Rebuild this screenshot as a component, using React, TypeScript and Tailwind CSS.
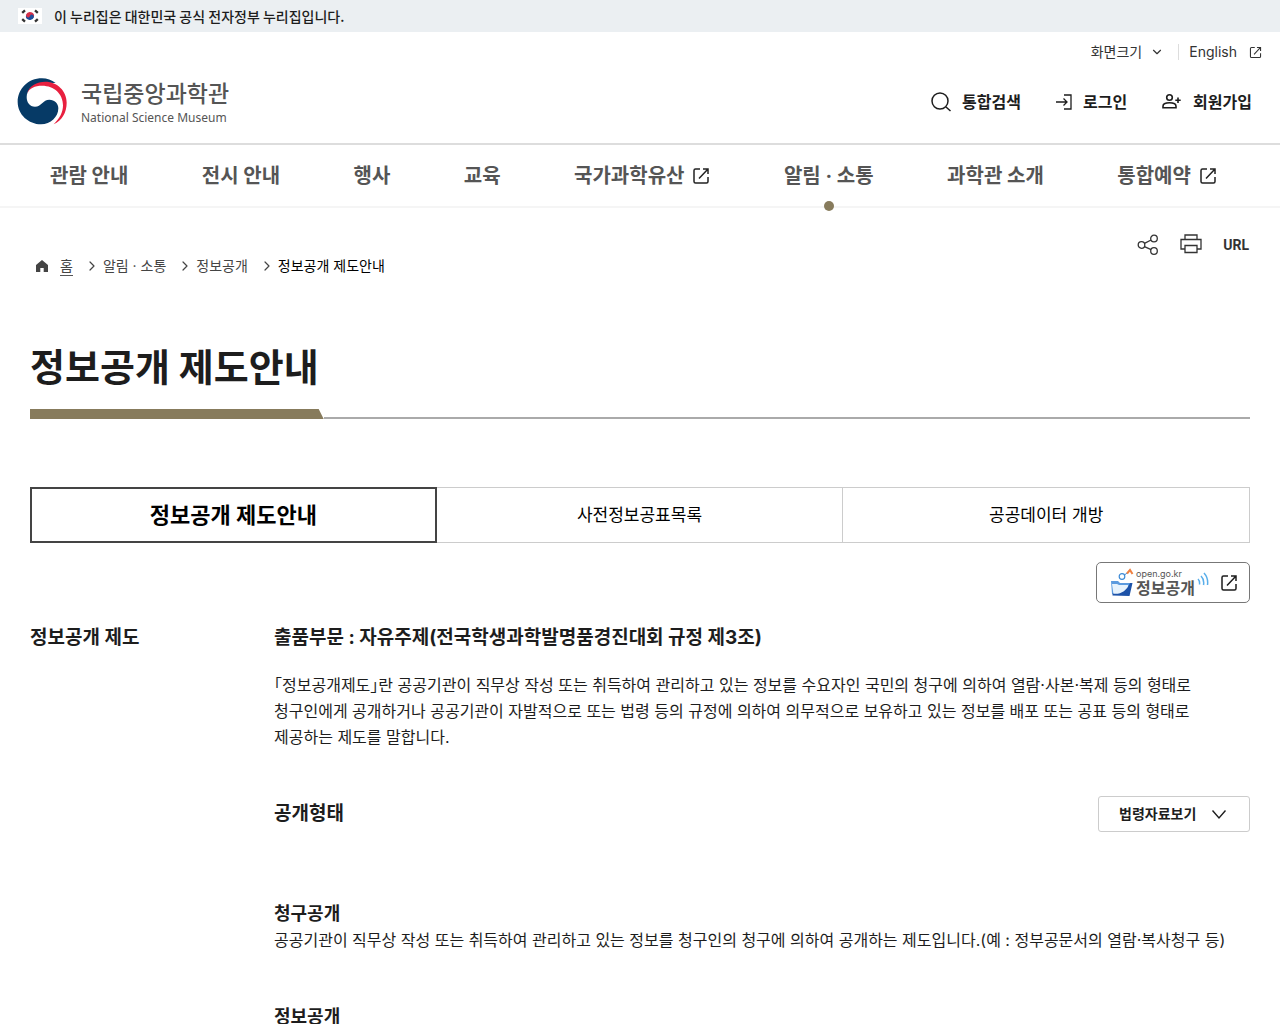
import React from 'react';
import { ChevronDown, ChevronRight } from 'lucide-react';

interface NavItem {
  label: string;
  external?: boolean;
  active?: boolean;
}

const NAV_ITEMS: NavItem[] = [
  { label: '관람 안내' },
  { label: '전시 안내' },
  { label: '행사' },
  { label: '교육' },
  { label: '국가과학유산', external: true },
  { label: '알림 · 소통', active: true },
  { label: '과학관 소개' },
  { label: '통합예약', external: true },
];

const TABS = ['정보공개 제도안내', '사전정보공표목록', '공공데이터 개방'];

function FlagIcon() {
  return (
    <svg viewBox="0 0 24 16" className="h-4 w-6" aria-hidden="true">
      <rect width="24" height="16" fill="#fff" />
      <g transform="rotate(20 12 8)">
        <path d="M8 8a4 4 0 0 1 8 0z" fill="#d5304a" />
        <path d="M8 8a4 4 0 0 0 8 0z" fill="#1d4f9c" />
        <circle cx="10" cy="8" r="2" fill="#d5304a" />
        <circle cx="14" cy="8" r="2" fill="#1d4f9c" />
      </g>
      <g stroke="#333" strokeWidth="2.4">
        <path d="M4.200 4.800l2.800-2.400M17 2.400l2.800 2.400M4.200 11.200l2.800 2.400M17 13.600l2.800-2.400" />
      </g>
    </svg>
  );
}

function LogoMark() {
  return (
    <svg viewBox="50 52 150 141" className="h-[47px] w-[50px]" aria-hidden="true">
      <path
        fill="#063a66"
        d="M166 67C154 58 140 53 125 53 83 53 52 85 52 124c0 38 33 67 70 67 29 0 52-22 52-48 0-15-11-26-27-26-19 0-24 21-43 21-16 0-25-13-25-29 0-22 19-40 51-43z"
      />
      <path
        fill="#e8203f"
        d="M80 98c8-23 29-35 55-35 36 0 64 28 64 63 0 29-14 54-39 65 18-17 28-36 28-57 0-34-26-59-63-59-22 0-37 8-45 23z"
      />
    </svg>
  );
}

function ExternalIcon({ className }: { className: string }) {
  return (
    <svg viewBox="0 0 18 18" className={className} fill="none" stroke="currentColor" strokeWidth="1.5" aria-hidden="true">
      <path d="M8 2H3.5A1.5 1.5 0 0 0 2 3.5v11A1.5 1.5 0 0 0 3.5 16h11a1.5 1.5 0 0 0 1.5-1.5V10M11 2h5v5M16 2 7 11.5" />
    </svg>
  );
}

function SearchIcon() {
  return (
    <svg viewBox="0 0 22 22" className="h-[22px] w-[22px]" fill="none" stroke="currentColor" strokeWidth="1.5" aria-hidden="true">
      <circle cx="10" cy="10" r="8" />
      <path d="m16 16 4.5 4" />
    </svg>
  );
}

function LoginIcon() {
  return (
    <svg viewBox="0 0 18 18" className="h-[18px] w-[18px]" fill="none" stroke="currentColor" strokeWidth="1.3" aria-hidden="true">
      <path d="M9 2h7v14H9M1 9h11M8.5 5.5 12 9l-3.5 3.5" />
    </svg>
  );
}

function JoinIcon() {
  return (
    <svg viewBox="0 0 22 18" className="h-[18px] w-[22px]" fill="none" stroke="currentColor" strokeWidth="1.6" aria-hidden="true">
      <circle cx="8.500" cy="4.500" r="2.800" />
      <path d="M2 14.700v-1.500c0-2.200 3-3.400 6.500-3.400s6.500 1.200 6.500 3.400v1.500zM14.300 7.200h5.400M17 4.500v5.400" />
    </svg>
  );
}

function ShareIcon() {
  return (
    <svg viewBox="0 0 22 22" className="h-[22px] w-[22px]" fill="none" stroke="currentColor" strokeWidth="1.3" aria-hidden="true">
      <circle cx="4.5" cy="11" r="3.3" />
      <circle cx="17" cy="4.5" r="3.3" />
      <circle cx="17" cy="17" r="3.3" />
      <path d="m7.5 9.4 6.6-3.4M7.5 12.6l6.6 3" />
    </svg>
  );
}

function PrintIcon() {
  return (
    <svg viewBox="0 0 22 22" className="h-[22px] w-[22px]" fill="none" stroke="currentColor" strokeWidth="1.3" aria-hidden="true">
      <path d="M5 5.500V1h12v4.500M5 15H1V5.500h20V15h-4" />
      <path d="M5 11.500h12v7H5z" />
    </svg>
  );
}

function HomeIcon() {
  return (
    <svg viewBox="0 0 14 14" className="h-3.5 w-3.5" fill="currentColor" aria-hidden="true">
      <path d="M7 1 1 6v7h4.3V9h3.4v4H13V6z" />
    </svg>
  );
}

// folder with two linked nodes
function FolderIcon() {
  return (
    <svg viewBox="0 0 24 30" className="h-[30px] w-6" aria-hidden="true">
      <path d="M1 13h7l2 2h10v11H2z" fill="#5b9ade" />
      <path d="M2 16 3.500 26.500h14L18 17H9l-2-1z" fill="#e6f2fc" />
      <path d="M20 15h2.500l-3 13-17-.5v-2c7 1.500 14-2 17.500-10.500z" fill="#1c52a8" />
      <circle cx="12" cy="8.500" r="2.800" fill="#fff" stroke="#3d8ad6" strokeWidth="1.2" />
      <path d="m14.500 7 2.500-2" stroke="#3d8ad6" />
      <path d="M17 5.500 20 2l2.500 4" fill="none" stroke="#f08040" strokeWidth="2" />
    </svg>
  );
}

function WaveIcon() {
  return (
    <svg viewBox="0 0 12 16" className="mb-2 h-4 w-3" fill="none" stroke="#59aeea" strokeWidth="1.500" aria-hidden="true">
      <path d="M1 8q2 2 1.500 5.500M4 5q3.500 3.500 2.500 9M7 2q4.500 5 3.500 12" />
    </svg>
  );
}

function Header() {
  return (
    <header>
      <div className="flex h-8 items-center gap-3 bg-[#ebeff2] px-[18px] text-sm text-[#1d1d1d]">
        <FlagIcon />
        <span className="font-['Noto_Sans_CJK_KR',sans-serif] font-medium">
          이 누리집은 대한민국 공식 전자정부 누리집입니다.
        </span>
      </div>

      <div className="flex h-[111px] items-start justify-between pl-[17px] pr-[18px]">
        <a href="#" className="mt-[46px] flex items-start gap-[14px] text-[#555]">
          <LogoMark />
          <span className="flex flex-col">
            <span className="text-[23px] font-medium leading-8">국립중앙과학관</span>
            <span className="font-['Noto_Sans',sans-serif] text-xs">National Science Museum</span>
          </span>
        </a>

        <div className="flex flex-col items-end">
          <div className="mt-[10px] flex h-5 items-center text-sm text-[#333]">
            <button type="button" className="flex items-center gap-2">
              화면크기
              <ChevronDown className="h-[14px] w-[14px]" strokeWidth={2} />
            </button>
            <span className="ml-[14px] mr-[10px] h-4 w-px bg-[#ddd]" />
            <a href="#" className="flex items-center gap-3">
              English
              <ExternalIcon className="h-[13px] w-[13px]" />
            </a>
          </div>
          <div className="mr-[10px] mt-7 flex h-6 items-center gap-[34px] text-base font-bold text-[#1d1d1d]">
            <a href="#" className="flex items-center gap-[10px]">
              <SearchIcon />
              통합검색
            </a>
            <a href="#" className="flex items-center gap-[10px]">
              <LoginIcon />
              로그인
            </a>
            <a href="#" className="flex items-center gap-[10px]">
              <JoinIcon />
              회원가입
            </a>
          </div>
        </div>
      </div>

      <nav className="flex h-[65px] items-center justify-between border-b-2 border-t-2 border-b-[#f5f5f5] border-t-[#ddd] pl-[50px] pr-[63px] text-xl font-bold text-[#555]">
        {NAV_ITEMS.map((item) => (
          <a
            key={item.label}
            href="#"
            className="relative flex h-full items-center gap-2 whitespace-nowrap"
            aria-current={item.active ? 'page' : undefined}
          >
            {item.label}
            {item.external && <ExternalIcon className="h-[18px] w-[18px] text-[#222]" />}
            {item.active && (
              <span className="absolute -bottom-[5px] left-1/2 h-[10px] w-[10px] -translate-x-1/2 rounded-full bg-[#877b5c]" />
            )}
          </a>
        ))}
      </nav>
    </header>
  );
}

function Breadcrumb() {
  return (
    <nav aria-label="현재 위치" className="mt-[46px] flex h-6 items-center gap-[3px] pl-[5px] text-sm text-[#444]">
      <HomeIcon />
      <a href="#" className="ml-2 border-b border-[#555] leading-[18px]">
        홈
      </a>
      <ChevronRight className="ml-2 h-4 w-4" strokeWidth={1.8} />
      <a href="#">알림 · 소통</a>
      <ChevronRight className="ml-2 h-4 w-4" strokeWidth={1.8} />
      <a href="#">정보공개</a>
      <ChevronRight className="ml-2 h-4 w-4" strokeWidth={1.8} />
      <span className="text-black">정보공개 제도안내</span>
    </nav>
  );
}

export default function App() {
  return (
    <div className="min-h-screen bg-white font-['Inter','Noto_Sans_CJK_KR',sans-serif] text-[#1d1d1d]">
      <Header />

      <main className="px-[30px]">
        <div className="flex items-start justify-between">
          <Breadcrumb />
          <div className="mt-[25px] flex h-6 items-center gap-[21px] pr-px text-[#333]">
            <button type="button" aria-label="공유">
              <ShareIcon />
            </button>
            <button type="button" aria-label="인쇄">
              <PrintIcon />
            </button>
            <button type="button" className="font-['Roboto',sans-serif] text-sm font-bold">
              URL
            </button>
          </div>
        </div>

        {/* PAGE TITLE */}
        <div className="mt-[61px] flex items-end">
          <div>
            <h1 className="pr-[5px] text-[38px] font-bold leading-[56px]">정보공개 제도안내</h1>
            <div className="mt-[14px] h-[10px] bg-[#877b5c] [clip-path:polygon(0_0,calc(100%-5px)_0,100%_100%,0_100%)]" />
          </div>
          <div className="h-[2px] flex-1 bg-[#aaa]" />
        </div>

        {/* TABS */}
        <div role="tablist" className="mt-[68px] grid h-14 grid-cols-3">
          {TABS.map((tab, i) => (
            <button
              key={tab}
              type="button"
              role="tab"
              aria-selected={i === 0}
              className={
                i === 0
                  ? 'border-2 border-[#444] text-[22px] font-bold text-black'
                  : 'border border-l-0 border-[#ccc] pt-[2px] text-[17px] text-black'
              }
            >
              {tab}
            </button>
          ))}
        </div>

        <div className="mt-[19px] flex justify-end">
          <a
            href="#"
            className="flex h-[41px] w-[154px] items-center justify-between rounded-[5px] border border-[#777] pl-[13px] pr-[11px]"
          >
            <span className="flex items-center gap-[2px]">
              <FolderIcon />
              <span className="flex flex-col text-[#555]">
                <span className="text-[9px] leading-[10px]">open.go.kr</span>
                <span className="text-base font-bold leading-[18px]">정보공개</span>
              </span>
              <WaveIcon />
            </span>
            <ExternalIcon className="h-[18px] w-[18px]" />
          </a>
        </div>

        <section className="mt-[21px] flex">
          <h2 className="w-1/5 shrink-0 text-[19px] font-bold leading-7">정보공개 제도</h2>

          <div className="flex-1">
            <h3 className="text-[19px] font-bold leading-7">
              출품부문 : 자유주제(전국학생과학발명품경진대회 규정 제3조)
            </h3>
            <p className="mt-5 text-base leading-[26px] break-keep [font-feature-settings:'halt']">
              「정보공개제도」란 공공기관이 직무상 작성 또는 취득하여 관리하고 있는 정보를 수요자인 국민의 청구에 의하여
              열람·사본·복제 등의 형태로 청구인에게 공개하거나 공공기관이 자발적으로 또는 법령 등의 규정에 의하여
              의무적으로 보유하고 있는 정보를 배포 또는 공표 등의 형태로 제공하는 제도를 말합니다.
            </p>

            <div className="mt-[46px] flex items-center justify-between">
              <h3 className="text-[19px] font-bold leading-7">공개형태</h3>
              <button
                type="button"
                className="flex h-9 w-[152px] items-center justify-between rounded-[3px] border border-[#ccc] pl-5 pr-[22px] text-sm font-bold"
              >
                법령자료보기
                <svg viewBox="0 0 16 16" className="h-4 w-4" fill="none" stroke="currentColor" strokeWidth="1.4" aria-hidden="true">
                  <path d="m1.500 4.500 6.500 7.500 6.500-7.500" />
                </svg>
              </button>
            </div>

            <h4 className="mt-[69px] text-lg font-bold leading-[26px]">청구공개</h4>
            <p className="text-base leading-[26px]">
              공공기관이 직무상 작성 또는 취득하여 관리하고 있는 정보를 청구인의 청구에 의하여 공개하는 제도입니다.(예 :
              정부공문서의 열람·복사청구 등)
            </p>

            <h4 className="mt-[51px] text-lg font-bold leading-[26px]">정보공개</h4>
          </div>
        </section>
      </main>
    </div>
  );
}
